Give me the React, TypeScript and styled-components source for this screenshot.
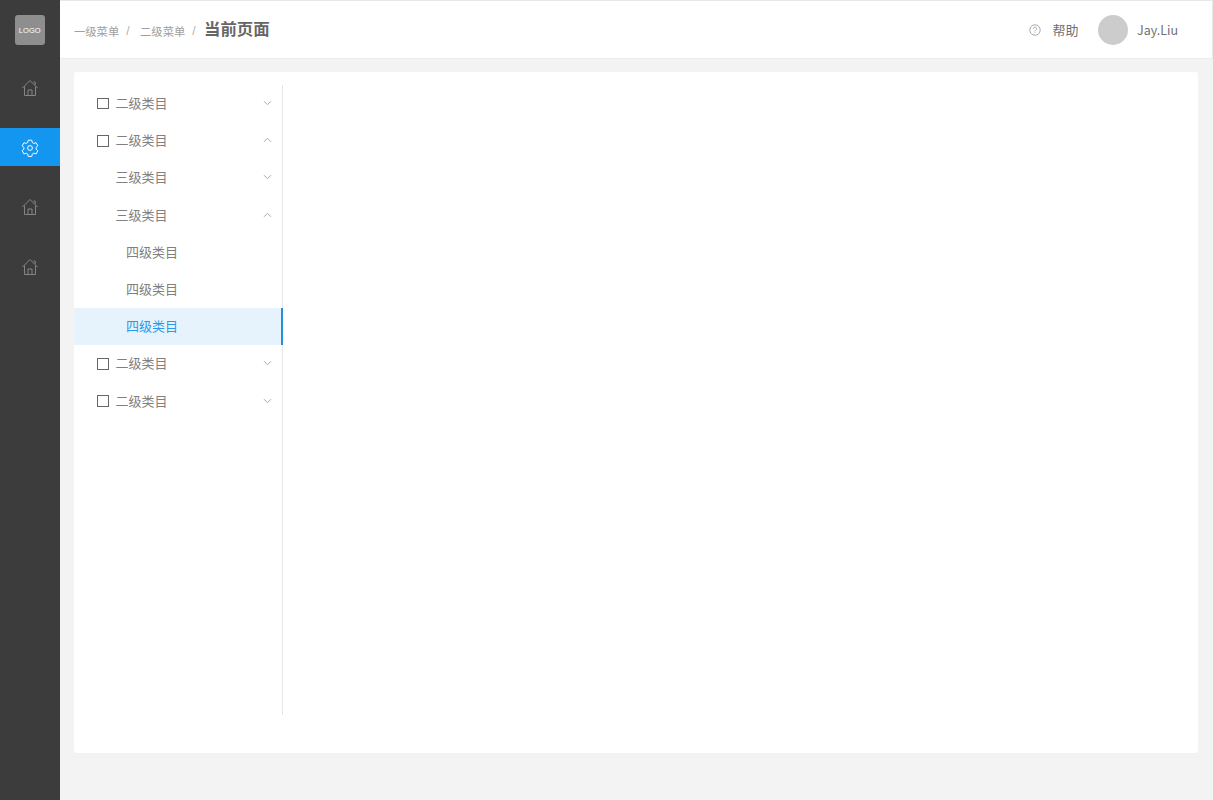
import React from "react";
import styled, { createGlobalStyle } from "styled-components";

const GlobalStyle = createGlobalStyle`
  html, body {
    margin: 0;
    padding: 0;
    height: 100%;
    background: #f3f3f3;
    font-family: "Noto Sans CJK SC", "Noto Sans", sans-serif;
  }
  * {
    box-sizing: border-box;
  }
`;

const Page = styled.div`
  display: flex;
  width: 100%;
  height: 800px;
  overflow: hidden;
`;

const Sidebar = styled.aside`
  display: flex;
  flex-direction: column;
  flex: 0 0 59.5px;
  background: #3c3c3c;
`;

const LogoWrap = styled.div`
  display: flex;
  justify-content: center;
  padding: 15px 0 0;
  height: 68.5px;
`;

const Logo = styled.div`
  display: flex;
  align-items: center;
  justify-content: center;
  width: 30px;
  height: 30px;
  border-radius: 3px;
  background: #8e8e8e;
  color: #ffffff;
  font-family: "Liberation Sans", sans-serif;
  font-size: 7.5px;
  letter-spacing: 0.1px;
`;

const NavItem = styled.div<{ $active?: boolean }>`
  display: flex;
  align-items: center;
  justify-content: center;
  height: 37.5px;
  margin-bottom: 22px;
  padding-top: 2px;
  background: ${(p) => (p.$active ? "#1296f0" : "transparent")};
  color: ${(p) => (p.$active ? "#ffffff" : "#858585")};
`;

const Main = styled.div`
  display: flex;
  flex-direction: column;
  flex: 1;
  min-width: 0;
`;

const Header = styled.header`
  display: flex;
  align-items: center;
  justify-content: space-between;
  height: 59px;
  flex: 0 0 59px;
  padding: 0 34px 0 14.5px;
  background: #ffffff;
  border-top: 1px solid #e8e8e8;
  border-right: 1px solid #e8e8e8;
  border-bottom: 1px solid #ebebeb;
`;

const Breadcrumb = styled.div`
  display: flex;
  align-items: center;
`;

const Crumb = styled.span`
  font-size: 11.3px;
  color: #a0a0a0;
  margin-top: 2px;
`;

const Slash = styled.span`
  font-size: 12px;
  color: #b0b0b0;
  margin: 2px 10.5px 0 7px;
  font-family: "Liberation Sans", sans-serif;
`;

const Current = styled.span`
  font-size: 16.4px;
  font-weight: 700;
  color: #666666;
  margin-left: -2px;
  margin-top: -3px;
`;

const HeaderRight = styled.div`
  display: flex;
  align-items: center;
`;

const HelpIcon = styled.span`
  display: flex;
  color: #a0a0a0;
  margin-right: 11px;
`;

const HelpText = styled.span`
  font-size: 13px;
  color: #707070;
  margin-right: 20px;
`;

const Avatar = styled.div`
  width: 30px;
  height: 30px;
  border-radius: 50%;
  background: #cccccc;
  margin-right: 8.5px;
`;

const UserName = styled.span`
  font-size: 12.5px;
  color: #707070;
`;

const Content = styled.main`
  flex: 1;
  padding: 13px 15px 47px 14.5px;
`;

const Card = styled.section`
  height: 681px;
  padding: 13px 0 38px;
  background: #ffffff;
  border-radius: 3px;
`;

const Menu = styled.nav`
  width: 209px;
  height: 100%;
  border-right: 1px solid #e6e6e6;
`;

const Row = styled.div<{ $level: number; $active?: boolean }>`
  display: flex;
  align-items: center;
  height: 37.2px;
  padding-left: ${(p) => (p.$level === 4 ? 52 : 23)}px;
  padding-right: 10px;
  padding-bottom: 2px;
  font-size: 13px;
  color: ${(p) => (p.$active ? "#2a9ae8" : "#808080")};
  background: ${(p) => (p.$active ? "#e6f3fd" : "transparent")};
  margin-right: ${(p) => (p.$active ? "-1px" : "0")};
  border-right: ${(p) => (p.$active ? "2px solid #2492d8" : "none")};
`;

const CheckBox = styled.span`
  flex: 0 0 11.5px;
  width: 11.5px;
  height: 11.5px;
  border: 1px solid #666666;
  margin-right: 7px;
  margin-top: 2px;
`;

const Spacer = styled.span<{ $w: number }>`
  flex: 0 0 ${(p) => p.$w}px;
`;

const Label = styled.span`
  flex: 1;
`;

const ArrowWrap = styled.span`
  display: flex;
  color: #aaaaaa;
  margin-top: 1px;
`;

const HomeIcon = () => (
  <svg width="18" height="18" viewBox="0 0 18 18" fill="none" stroke="currentColor" strokeWidth="1">
    <path d="M1.5 9 L9 1.5 L16.5 9" />
    <path d="M3.5 7.5 V16.5 H14.5 V7.5" />
    <path d="M7 16.5 V11 H11 V16.5" />
    <path d="M12.5 3 H14.2 V6" />
  </svg>
);

const GearIcon = () => (
  <svg width="18" height="18" viewBox="0 0 24 24" fill="none" stroke="currentColor" strokeWidth="1.3" strokeLinejoin="round">
    <circle cx="12" cy="12" r="3.2" />
    <path d="M9.6 1.6h4.8l.7 3.2 1.9 1.1 3.1-1 2.4 4.2-2.4 2.2v2.2l2.4 2.2-2.4 4.2-3.1-1-1.9 1.1-.7 3.2H9.6l-.7-3.2L7 18.9l-3.1 1-2.4-4.2 2.4-2.2v-2.2L1.5 9.1l2.4-4.2 3.1 1 1.9-1.1z" />
  </svg>
);

const QuestionIcon = () => (
  <svg width="12" height="12" viewBox="0 0 12 12" fill="none" stroke="currentColor" strokeWidth="0.9">
    <circle cx="6" cy="6" r="5.2" />
    <path d="M4.4 4.7 A1.6 1.6 0 1 1 6.6 6.2 C6.1 6.5 6 6.8 6 7.4" />
    <path d="M6 8.3 V9.1" />
  </svg>
);

const Chevron = ({ up }: { up?: boolean }) => (
  <ArrowWrap>
    <svg width="9" height="6" viewBox="0 0 9 6" fill="none" stroke="currentColor" strokeWidth="1">
      <path d={up ? "M1 4.8 L4.5 1.3 L8 4.8" : "M1 1.2 L4.5 4.7 L8 1.2"} />
    </svg>
  </ArrowWrap>
);

type Item = {
  label: string;
  level: number;
  open?: boolean;
  active?: boolean;
};

const items: Item[] = [
  { label: "二级类目", level: 2, open: false },
  { label: "二级类目", level: 2, open: true },
  { label: "三级类目", level: 3, open: false },
  { label: "三级类目", level: 3, open: true },
  { label: "四级类目", level: 4 },
  { label: "四级类目", level: 4 },
  { label: "四级类目", level: 4, active: true },
  { label: "二级类目", level: 2, open: false },
  { label: "二级类目", level: 2, open: false },
];

const App = () => {
  return (
    <Page>
      <GlobalStyle />
      <Sidebar>
        <LogoWrap>
          <Logo>LOGO</Logo>
        </LogoWrap>
        <NavItem>
          <HomeIcon />
        </NavItem>
        <NavItem $active>
          <GearIcon />
        </NavItem>
        <NavItem>
          <HomeIcon />
        </NavItem>
        <NavItem>
          <HomeIcon />
        </NavItem>
      </Sidebar>
      <Main>
        <Header>
          <Breadcrumb>
            <Crumb>一级菜单</Crumb>
            <Slash>/</Slash>
            <Crumb>二级菜单</Crumb>
            <Slash>/</Slash>
            <Current>当前页面</Current>
          </Breadcrumb>
          <HeaderRight>
            <HelpIcon>
              <QuestionIcon />
            </HelpIcon>
            <HelpText>帮助</HelpText>
            <Avatar />
            <UserName>Jay.Liu</UserName>
          </HeaderRight>
        </Header>
        <Content>
          <Card>
            <Menu>
              {items.map((item, i) => (
                <Row key={i} $level={item.level} $active={item.active}>
                  {item.level === 2 && <CheckBox />}
                  {item.level === 3 && <Spacer $w={18.5} />}
                  <Label>{item.label}</Label>
                  {item.open !== undefined && <Chevron up={item.open} />}
                </Row>
              ))}
            </Menu>
          </Card>
        </Content>
      </Main>
    </Page>
  );
};

export default App;
